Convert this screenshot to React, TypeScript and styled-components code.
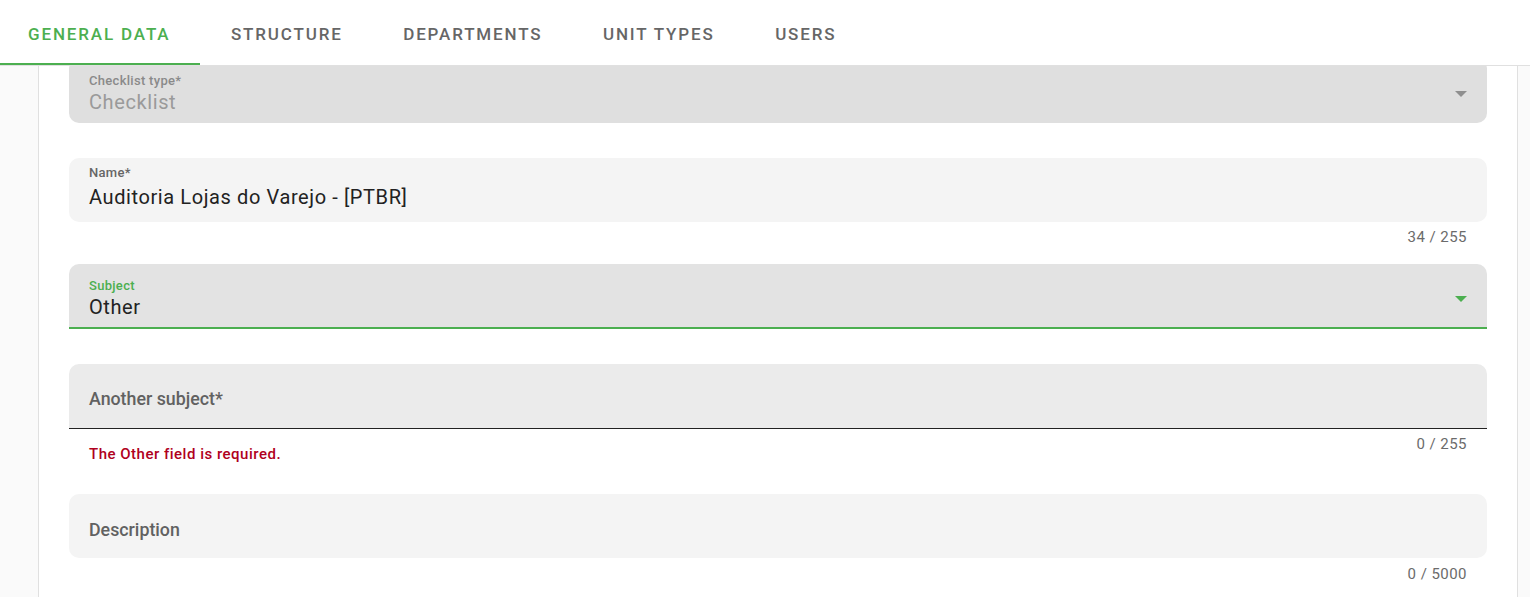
import styled, {createGlobalStyle} from "styled-components"

const GlobalStyle = createGlobalStyle`
    html, body {
        margin: 0;
        padding: 0;
        background: #fff;
        font-family: Roboto, "Noto Sans", sans-serif;
    }
`;

const green = "#4caf50";

const Page = styled.div`
    display: flex;
    flex-direction: column;
    height: 597px;
    overflow: hidden;
`;

const TabBar = styled.nav`
    display: flex;
    height: 65px;
    border-bottom: 1px solid #e0e0e0;
    background: #fff;
    position: relative;
    z-index: 1;
`;

const Tab = styled.div<{ $active?: boolean }>`
    display: flex;
    align-items: center;
    padding: 5px 30px 0 30.5px;
    font-size: 17px;
    font-weight: 500;
    letter-spacing: 1.85px;
    text-transform: uppercase;
    color: ${p => p.$active ? green : "#666"};
    border-bottom: 2px solid ${p => p.$active ? green : "transparent"};
    &:first-child {
        padding-left: 28px;
    }
`;

const Body = styled.div`
    flex: 1;
    display: grid;
    grid-template-columns: 39px 1fr 13px;
    min-height: 0;
`;

const Gutter = styled.div<{ $side: "left" | "right" }>`
    background: #fafafa;
    border-${p => p.$side === "left" ? "right" : "left"}: 1px solid #e0e0e0;
`;

const Main = styled.main`
    overflow: hidden;
    background: #fff;
`;

const Form = styled.div`
    display: flex;
    flex-direction: column;
    padding: 0 30px;
    margin-top: -7px;
`;

type FieldKind = "disabled" | "filled" | "focused" | "error"

const bgs: Record<FieldKind, string> = {
    disabled: "#dfdfdf",
    filled: "#f4f4f4",
    focused: "#e3e3e3",
    error: "#ebebeb",
};

const Field = styled.div<{ $kind: FieldKind; $select?: boolean }>`
    display: flex;
    align-items: flex-start;
    height: ${p => p.$kind === "focused" || p.$kind === "error" ? 65 : 64}px;
    box-sizing: border-box;
    padding: ${p => p.$select ? 14 : 7}px 20px 0 20px;
    background: ${p => bgs[p.$kind]};
    border-radius: ${p => p.$kind === "focused" || p.$kind === "error" ? "10px 10px 0 0" : "10px"};
    border-bottom: ${p => p.$kind === "focused" ? `2px solid ${green}` : p.$kind === "error" ? "1px solid #222" : "none"};
`;

const FieldText = styled.div<{ $gap: number }>`
    flex: 1;
    display: flex;
    flex-direction: column;
    gap: ${p => p.$gap}px;
`;

const Label = styled.div<{ $color: string }>`
    font-size: 13px;
    line-height: 16px;
    font-weight: 500;
    letter-spacing: 0.3px;
    color: ${p => p.$color};
`;

const Value = styled.div<{ $muted?: boolean }>`
    font-size: 20px;
    line-height: 24px;
    letter-spacing: 0.6px;
    color: ${p => p.$muted ? "#9a9a9a" : "#222"};
`;

const Placeholder = styled.div<{ $shift?: number }>`
    flex: 1;
    align-self: center;
    margin-top: ${p => p.$shift ?? 0}px;
    font-size: 17.8px;
    font-weight: 500;
    color: #616161;
`;

const Arrow = styled.svg`
    margin-top: 18px;
    flex-shrink: 0;
`;

const Details = styled.div<{ $h: number }>`
    display: flex;
    justify-content: space-between;
    align-items: flex-start;
    height: ${p => p.$h}px;
    padding: 0 20px;
`;

const ErrorMsg = styled.div`
    margin-top: 17px;
    font-size: 15px;
    line-height: 16px;
    font-weight: 500;
    letter-spacing: 0.5px;
    color: #b00020;
`;

const Counter = styled.div<{ $top?: number }>`
    margin-top: ${p => p.$top ?? 7}px;
    margin-left: auto;
    font-size: 15px;
    line-height: 16px;
    letter-spacing: 0.45px;
    color: #6b6b6b;
`;

const DropArrow = ({color}: { color: string }) => (
    <Arrow width="12" height="6" viewBox="0 0 12 6">
        <path d="M0 0 L12 0 L6 6 Z" fill={color} />
    </Arrow>
)

const App = () => {
    return (
        <Page>
            <GlobalStyle />
            <TabBar>
                <Tab $active>General Data</Tab>
                <Tab>Structure</Tab>
                <Tab>Departments</Tab>
                <Tab>Unit Types</Tab>
                <Tab>Users</Tab>
            </TabBar>
            <Body>
                <Gutter $side="left" />
                <Main>
                    <Form>
                        <Field $kind="disabled" $select>
                            <FieldText $gap={1}>
                                <Label $color="#8a8a8a">Checklist type*</Label>
                                <Value $muted>Checklist</Value>
                            </FieldText>
                            <DropArrow color="#8f8f8f" />
                        </Field>
                        <Details $h={35} />

                        <Field $kind="filled">
                            <FieldText $gap={4}>
                                <Label $color="#666">Name*</Label>
                                <Value>Auditoria Lojas do Varejo - [PTBR]</Value>
                            </FieldText>
                        </Field>
                        <Details $h={42}>
                            <Counter>34 / 255</Counter>
                        </Details>

                        <Field $kind="focused" $select>
                            <FieldText $gap={1}>
                                <Label $color={green}>Subject</Label>
                                <Value>Other</Value>
                            </FieldText>
                            <DropArrow color={green} />
                        </Field>
                        <Details $h={35} />

                        <Field $kind="error">
                            <Placeholder $shift={-2}>Another subject*</Placeholder>
                        </Field>
                        <Details $h={65}>
                            <ErrorMsg>The Other field is required.</ErrorMsg>
                            <Counter>0 / 255</Counter>
                        </Details>

                        <Field $kind="filled">
                            <Placeholder>Description</Placeholder>
                        </Field>
                        <Details $h={42}>
                            <Counter $top={8}>0 / 5000</Counter>
                        </Details>
                    </Form>
                </Main>
                <Gutter $side="right" />
            </Body>
        </Page>
    )
}

export default App
